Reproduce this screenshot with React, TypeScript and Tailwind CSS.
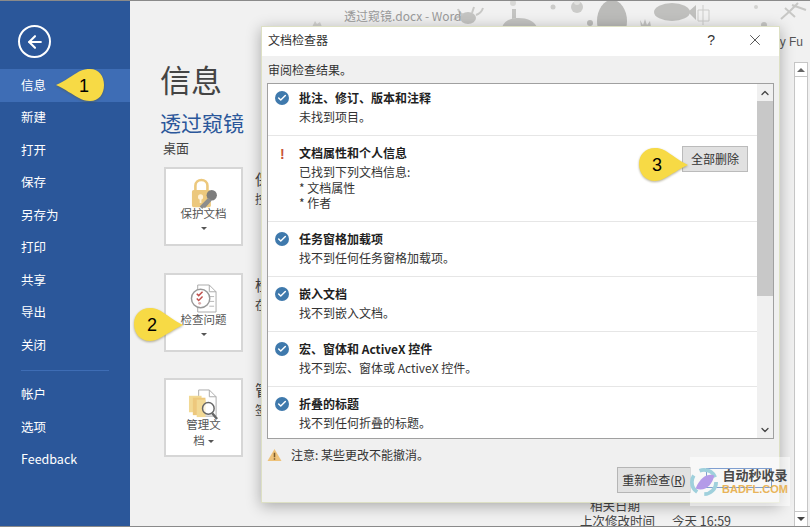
import { ArrowLeft, Check, ChevronDown, ChevronUp, X } from "lucide-react";

const font = { fontFamily: '"Noto Sans CJK SC", "Liberation Sans", sans-serif' };
const latin = { fontFamily: '"Liberation Sans", sans-serif' };

const navTop = ["新建", "打开", "保存", "另存为", "打印", "共享", "导出", "关闭"];
const navBottom = ["帐户", "选项", "Feedback"];

type Row = { title: string; lines: string[]; warn?: boolean; height: string; pad: string };

const rows: Row[] = [
  { title: "批注、修订、版本和注释", lines: ["未找到项目。"], height: "h-[52px]", pad: "pt-[6px]" },
  {
    title: "文档属性和个人信息",
    lines: ["已找到下列文档信息:", "* 文档属性", "* 作者"],
    warn: true,
    height: "h-[86px]",
    pad: "pt-[9px]",
  },
  { title: "任务窗格加载项", lines: ["找不到任何任务窗格加载项。"], height: "h-[55px]", pad: "pt-[9px]" },
  { title: "嵌入文档", lines: ["找不到嵌入文档。"], height: "h-[55px]", pad: "pt-[9px]" },
  { title: "宏、窗体和 ActiveX 控件", lines: ["找不到宏、窗体或 ActiveX 控件。"], height: "h-[55px]", pad: "pt-[9px]" },
  { title: "折叠的标题", lines: ["找不到任何折叠的标题。"], height: "h-[52px]", pad: "pt-[9px]" },
];

function Callout({ n, tip, className }: { n: string; tip: "left" | "right"; className: string }) {
  return (
    <div className={`absolute flex h-[36px] w-[52px] items-center ${className}`}>
      <svg viewBox="0 0 52 36" className="absolute inset-0 h-full w-full drop-shadow-[0_1px_1px_rgba(90,80,30,0.45)]">
        {tip === "left" ? (
          <path
            d="M1 17C10 13 18 7 24 3.500C28 1.500 32 1 35 1C44 1 49 8 49 17C49 26 44 33 35 33C31 33 27 32 24 30C18 27 10 21 1 17Z"
            fill="#f7da45"
          />
        ) : (
          <path
            d="M51 18C42 14 34 7 28 3.500C24 1.500 21 1 18 1C8 1 2 8 2 17C2 26 8 34 18 34C21 34 25 33 28 31C34 28 42 22 51 18Z"
            fill="#f7da45"
          />
        )}
      </svg>
      <span
        className={`relative w-[34px] text-center text-[18px] leading-none text-black ${tip === "left" ? "ml-[12px]" : "ml-[3px]"}`}
        style={latin}
      >
        {n}
      </span>
    </div>
  );
}

function TitlePattern() {
  return (
    <svg viewBox="130 0 680 26" className="absolute inset-0 h-full w-full" fill="#d2d2d0">
      {/* grass left of the title */}
      <path d="M312 26l3-6 2 3 3-2 2 5z" />
      {/* crab */}
      <ellipse cx="468" cy="17" rx="8" ry="6" fill="#c4c4c2" />
      <path d="M454 19c2-3 4-4 7-3M476 14c3-1 6-4 7-7M458 8c1 3 3 5 5 6M472 12l2-6" fill="none" stroke="#c8c8c6" strokeWidth="2" />
      {/* submarine */}
      <path d="M502 26c3-7 9-9 17-9s15 3 18 9z" fill="#c4c4c2" />
      <path d="M512 18V8h4v9z" fill="#c4c4c2" />
      <circle cx="513" cy="2" r="3" fill="#d8d8d6" />
      <circle cx="553" cy="6" r="2.500" fill="#cbcbc9" />
      <circle cx="577" cy="6" r="6" fill="#cbcbc9" />
      <circle cx="577" cy="1" r="3" fill="#e2e2e0" />
      <circle cx="590" cy="22" r="3" fill="#bdbdbb" />
      <ellipse cx="612" cy="20" rx="15" ry="21" fill="#bbbbb9" />
      <path d="M641 26l-1-7 3 5 2-6 2 6 3-4 1 6z" fill="#c4c4c2" />
      {/* fish */}
      <ellipse cx="672" cy="11" rx="18" ry="9" fill="#c0c0be" />
      <path d="M688 11l8-7v15z" fill="#c0c0be" />
      <path d="M698 9h11v11h-11zM703 4v20" fill="none" stroke="#cbcbc9" />
      <circle cx="756" cy="6" r="2" fill="#d2d2d0" />
      <circle cx="764" cy="24" r="3" fill="#c8c8c6" />
      {/* crab right */}
      <path d="M781 18l9-8 8-8M785 7l10 9M792 4l14 5" fill="none" stroke="#c8c8c6" strokeWidth="2" />
    </svg>
  );
}

type DocAction = { label: string[]; heading: string; desc: string; icon: React.ReactNode };

function DocButton({ label, icon }: { label: string[]; icon: React.ReactNode }) {
  return (
    <div className="flex h-[79px] w-[79px] shrink-0 flex-col items-center border-2 border-[#d6d6d6] bg-white pt-[9px]">
      <div className="flex h-[27px] justify-center">{icon}</div>
      <div className="text-center text-[11.500px] leading-[16px] text-[#555]">
        {label.map((line, i) => (
          <div key={line}>
            {line}
            {label.length > 1 && i === label.length - 1 ? (
              <span className="ml-[3px] inline-block h-0 w-0 border-x-[3px] border-t-[3px] border-x-transparent border-t-[#555] align-middle" />
            ) : null}
          </div>
        ))}
      </div>
      {label.length === 1 ? (
        <div className="mt-[6px] h-0 w-0 border-x-[3px] border-t-[3px] border-x-transparent border-t-[#555]" />
      ) : null}
    </div>
  );
}

const lockIcon = (
  <svg viewBox="0 0 34 36" className="h-[31px] w-[30px] shrink-0">
    <path d="M7 15V9c0-9 14-9 14 0v6" fill="none" stroke="#ecc87d" strokeWidth="3" />
    <rect x="3" y="14" width="22" height="20" rx="2" fill="#ecc87d" />
    <circle cx="13" cy="22" r="3" fill="#fff2d8" />
    <path d="M12 23h2v6h-2z" fill="#fff2d8" />
    <circle cx="26" cy="20" r="6" fill="#7d7d7d" />
    <path d="M22 23l-10 10 3 3 2-2 1 1 8-9z" fill="#8d8d8d" />
  </svg>
);

const inspectIcon = (
  <svg viewBox="0 0 28 30" className="h-[29px] w-[27px] shrink-0">
    <path d="M8 1h12l7 7v21H8z" fill="#fff" stroke="#aaa" />
    <path d="M20 1v7h7" fill="none" stroke="#aaa" />
    <path d="M20 13h5M20 18h5M20 23h5" stroke="#b5b5b5" />
    <circle cx="11" cy="15" r="9.500" fill="#fff" stroke="#999" strokeWidth="1.500" />
    <path d="M7 10l2 2 4-4M7 15l2 2 4-4" fill="none" stroke="#c0504d" strokeWidth="1.500" />
    <circle cx="10" cy="20" r="1.500" fill="#d9a9a8" />
  </svg>
);

const manageIcon = (
  <svg viewBox="0 0 32 32" className="h-[31px] w-[31px] shrink-0">
    <path d="M11 1h11l7 7v20H11z" fill="#fff" stroke="#aaa" />
    <path d="M22 1v7h7" fill="none" stroke="#aaa" />
    <rect x="1" y="7" width="13" height="17" fill="#f2d994" />
    <rect x="5" y="9" width="13" height="18" fill="#edc87d" />
    <rect x="9" y="11" width="9" height="18" fill="#f2d994" />
    <circle cx="21" cy="20" r="6" fill="#fff" fillOpacity="0.7" stroke="#666" strokeWidth="1.500" />
    <path d="M25 25l5 6" stroke="#666" strokeWidth="2.500" />
  </svg>
);

const actions: DocAction[] = [
  { label: ["保护文档"], heading: "保", desc: "控", icon: lockIcon },
  { label: ["检查问题"], heading: "检", desc: "在", icon: inspectIcon },
  { label: ["管理文", "档"], heading: "管", desc: "签", icon: manageIcon },
];

export default function App() {
  return (
    <div className="relative flex h-[527px] w-[810px] overflow-hidden border-y border-[#8a8a8a] bg-[#f1f1f1]" style={font}>
      {/* backstage nav */}
      <nav className="flex w-[130px] shrink-0 flex-col bg-[#2b579a] text-[12.500px] text-white">
        <div className="flex h-[68px] items-center pl-[18px] pt-[13px]">
          <div className="flex h-[33px] w-[33px] items-center justify-center rounded-full border-2 border-white">
            <ArrowLeft size={20} strokeWidth={2.500} />
          </div>
        </div>
        <div className="flex h-[33px] items-center bg-[#3e6db5] pl-[21px]">信息</div>
        <div className="-mt-[0.500px]">
          {navTop.map((item) => (
            <div key={item} className="flex h-[32.500px] items-center pl-[21px]">
              {item}
            </div>
          ))}
        </div>
        <div className="mx-[21px] my-[8px] border-t border-[#3e6db5]" />
        {navBottom.map((item) => (
          <div key={item} className="flex h-[32.500px] items-center pl-[21px]">
            {item}
          </div>
        ))}
      </nav>

      {/* info page behind the dialog */}
      <main className="relative min-w-0 flex-1">
        <div className="relative h-[26px] overflow-hidden">
          <TitlePattern />
          <div className="relative pl-[214px] pt-[6px] text-[12px] leading-[17px] text-[#9a9a9a]">透过窥镜.docx - Word</div>
        </div>
        <div className="pl-[30px] pt-[34px]">
          <h1 className="text-[31px] leading-[36px] text-[#444]">信息</h1>
          <div className="mt-[13px] text-[21px] leading-[25px] text-[#2b579a]">透过窥镜</div>
          <div className="mt-[4px] pl-[3px] text-[13px] leading-[18px] text-[#444]">桌面</div>
          <div className="mt-[10px] flex flex-col gap-[26.500px] pl-[4px]">
            {actions.map((action) => (
              <div key={action.heading} className="flex gap-[12px]">
                <DocButton label={action.label} icon={action.icon} />
                {/* only the first characters show, the dialog covers the rest */}
                <div className="pt-[1px] text-[#444]">
                  <div className="text-[15px] leading-[22px]">{action.heading}</div>
                  <div className="text-[12px] leading-[18px]">{action.desc}</div>
                </div>
              </div>
            ))}
          </div>
        </div>
      </main>

      {/* right column peeking out from behind the dialog */}
      <div className="absolute right-[7px] top-[32px] text-[12px] text-[#555]" style={latin}>
        y Fu
      </div>
      <div className="absolute right-[2px] top-[61px] h-[465px] w-[14px] border border-[#c6c6c6] bg-white">
        <div className="flex h-[14px] items-center justify-center border-b border-[#c6c6c6]">
          <div className="h-0 w-0 border-x-[4px] border-b-[4px] border-x-transparent border-b-[#666]" />
        </div>
        <div className="absolute bottom-0 left-0 flex h-[15px] w-full items-center justify-center border-t border-[#c6c6c6]">
          <div className="h-0 w-0 border-x-[4px] border-t-[4px] border-x-transparent border-t-[#444]" />
        </div>
      </div>
      <div className="absolute left-[590px] top-[497px] text-[12.500px] leading-[16px] text-[#444]">相关日期</div>
      <div className="absolute left-[580px] top-[514px] whitespace-nowrap text-[12.500px] leading-[12px] text-[#444]">
        上次修改时间<span className="ml-[17px]">今天 16:59</span>
      </div>

      {/* document inspector dialog */}
      <section className="absolute left-[261px] top-[25px] flex h-[477px] w-[519px] flex-col border border-[#dde0c4] bg-[#f0f0f0] shadow-[0_3px_14px_rgba(0,0,0,0.3)]">
        <header className="flex h-[29px] shrink-0 items-center bg-white pb-[3px] pl-[6px] text-[12px] text-[#333]">
          <span className="flex-1">文档检查器</span>
          <span className="mr-[31px] text-[14px]" style={latin}>?</span>
          <X size={18} strokeWidth={1} className="mr-[15px] text-[#222]" />
        </header>
        <div className="flex h-[27px] shrink-0 items-center pl-[6px] text-[12px] text-[#333]">审阅检查结果。</div>
        <div className="mx-[5px] flex h-[356px] shrink-0 overflow-hidden border border-[#a0a0a0] bg-white">
          <div className="min-w-0 flex-1">
            {rows.map((row, i) => (
              <div
                key={row.title}
                className={`flex pl-[7px] ${row.pad} ${row.height} ${i < rows.length - 1 ? "border-b border-[#e6e6e6]" : ""}`}
              >
                <div className="flex w-[24px] shrink-0 justify-start pt-[1px]">
                  {row.warn ? (
                    <span className="ml-[5px] text-[14px] font-bold leading-[16px] text-[#c8563a]" style={latin}>!</span>
                  ) : (
                    <span className="flex h-[14px] w-[14px] items-center justify-center rounded-full bg-[#3f79ac]">
                      <Check size={10} strokeWidth={3.500} className="text-white" />
                    </span>
                  )}
                </div>
                <div className="flex-1 text-[12px] leading-[15.500px] text-[#333]">
                  <div className="mb-[3.500px] font-bold text-[#1f1f1f]">{row.title}</div>
                  {row.lines.map((line) => (
                    <div key={line}>{line}</div>
                  ))}
                </div>
                {row.warn ? (
                  <div className="mr-[9px] mt-[1px] flex h-[26px] w-[66px] items-center justify-center border border-[#bbb] bg-[#e1e1e1] text-[12px] text-[#333]">
                    全部删除
                  </div>
                ) : null}
              </div>
            ))}
          </div>
          <div className="flex w-[16px] shrink-0 flex-col bg-[#f0f0f0]">
            <div className="flex h-[17px] items-center justify-center">
              <ChevronUp size={12} strokeWidth={2.500} className="text-[#444]" />
            </div>
            <div className="h-[195px] bg-[#c8c8c8]" />
            <div className="flex-1" />
            <div className="flex h-[17px] items-center justify-center">
              <ChevronDown size={12} strokeWidth={2.500} className="text-[#444]" />
            </div>
          </div>
        </div>
        <div className="flex h-[32px] shrink-0 items-center gap-[9px] pl-[5px] text-[12px] text-[#333]">
          <svg viewBox="0 0 16 14" className="h-[14px] w-[15px]">
            <path d="M8 0.500L15.500 13.500H0.500Z" fill="#eec27a" />
            <path d="M7.200 4.500h1.600v5h-1.600zM7.200 10.500h1.600v1.600h-1.600z" fill="#7a5a2a" />
          </svg>
          注意: 某些更改不能撤消。
        </div>
        <div className="-mt-[4px] ml-[355px] flex h-[26px] w-[74px] items-center justify-center border border-[#b5b5b5] bg-[#e1e1e1] text-[12px] text-[#333]">
          重新检查(<span className="underline">R</span>)
        </div>
      </section>

      <Callout n="1" tip="left" className="left-[55px] top-[67px]" />
      <Callout n="2" tip="right" className="left-[132px] top-[306px]" />
      <Callout n="3" tip="right" className="left-[637px] top-[146px]" />

      {/* watermark */}
      <div className="absolute left-[690px] top-[456px] flex h-[49px] w-[100px] items-center bg-white/50">
        <div className="absolute left-[16px] top-[11px] h-[20px] w-[66px] border border-[#7f9fd0]" />
        <svg viewBox="0 0 30 30" className="relative h-[28px] w-[28px] shrink-0">
          <circle cx="15" cy="15" r="13" fill="none" stroke="#9fd0dc" strokeWidth="4" strokeDasharray="20 8" />
          <path d="M6 22C12 8 20 6 26 8 24 18 16 26 6 22Z" fill="#b49ae8" />
        </svg>
        <div className="relative ml-[4px] whitespace-nowrap text-center font-bold leading-none">
          <div className="text-[13px] text-[#4b4b4b]">自动秒收录</div>
          <div className="mt-[3px] text-[11px] text-[#e8b45a]" style={latin}>BADFL.COM</div>
        </div>
      </div>
    </div>
  );
}
